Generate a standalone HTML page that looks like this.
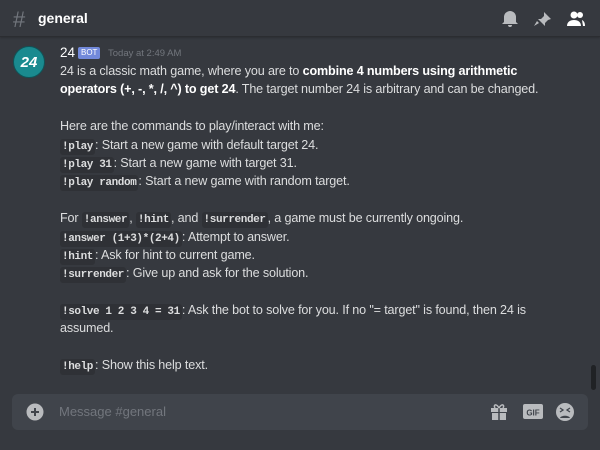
<!DOCTYPE html>
<html><head><style>
*{margin:0;padding:0;box-sizing:border-box}
body{width:600px;height:450px;background:#36393f;font-family:"Liberation Sans",sans-serif;color:#dcddde;overflow:hidden;position:relative}
.hdr{position:absolute;left:0;top:0;width:600px;height:37px;border-bottom:1px solid #2b2d31;box-shadow:0 1px 2px rgba(0,0,0,.2)}
.hash{position:absolute;left:13px;top:7px;font-size:22px;color:#72767d}
.title{position:absolute;left:38px;top:10px;font-size:14px;font-weight:bold;color:#fff}
.av{position:absolute;left:13px;top:46px;width:32px;height:32px;border-radius:50%;background:#1a8a8f;color:#fff;font-weight:bold;font-style:italic;font-size:15px;text-align:center;line-height:32px;border:1px solid #0f5458}
.name{position:absolute;left:60px;top:45px;font-size:13.5px;color:#fff;font-weight:500}
.bot{position:absolute;left:78px;top:47px;background:#7289da;color:#fff;font-size:8px;padding:1px 3px;border-radius:2px;line-height:10px}
.time{position:absolute;left:108px;top:48px;font-size:9.5px;color:#72767d}
.msg{position:absolute;left:60px;top:62px;font-size:12.6px;line-height:18.4px;white-space:nowrap;letter-spacing:-0.15px}
.msg div{height:18.4px}
.msg b{color:#fff}
code{font-family:"Liberation Mono",monospace;font-weight:bold;font-size:11px;background:#2f3136;padding:2px 2px;border-radius:3px;color:#dcddde;letter-spacing:-0.4px;line-height:0}
.input{position:absolute;left:12px;top:394px;width:576px;height:36px;background:#40444b;border-radius:6px}
.ph{position:absolute;left:59px;top:404px;font-size:13px;color:#72767d}
.sb{position:absolute;left:591px;top:365px;width:5px;height:25px;background:#202225;border-radius:3px}
</style></head><body>
<div class="hdr"></div>
<div class="hash">#</div>
<div class="title">general</div>
<svg style="position:absolute;left:500px;top:9px" width="90" height="20" viewBox="0 0 90 20">
<path d="M4 13V8a6 6 0 0 1 12 0v5l2 2H2z M8 16h4a2 2 0 0 1-4 0z" fill="#b9bbbe"/>
<path d="M44 3l7 7-3 1-3 3 0 3-7-7 3 0 3-3z M37 12l-3 5 5-3z" fill="#b9bbbe"/>
<circle cx="74" cy="6" r="3.5" fill="#fff"/><path d="M67 17c0-4 3-6 7-6s7 2 7 6z" fill="#fff"/>
<circle cx="80" cy="6" r="3" fill="#fff"/><path d="M82 11c2 1 3 3 3 6h-2z" fill="#fff"/>
</svg>
<div class="av">24</div>
<div class="name">24</div>
<div class="bot">BOT</div>
<div class="time">Today at 2:49 AM</div>
<div class="msg">
<div>24 is a classic math game, where you are to <b>combine 4 numbers using arithmetic</b></div>
<div><b>operators (+, -, *, /, ^) to get 24</b>. The target number 24 is arbitrary and can be changed.</div>
<div></div>
<div>Here are the commands to play/interact with me:</div>
<div><code>!play</code>: Start a new game with default target 24.</div>
<div><code>!play 31</code>: Start a new game with target 31.</div>
<div><code>!play random</code>: Start a new game with random target.</div>
<div></div>
<div>For <code>!answer</code>, <code>!hint</code>, and <code>!surrender</code>, a game must be currently ongoing.</div>
<div><code>!answer (1+3)*(2+4)</code>: Attempt to answer.</div>
<div><code>!hint</code>: Ask for hint to current game.</div>
<div><code>!surrender</code>: Give up and ask for the solution.</div>
<div></div>
<div><code>!solve 1 2 3 4 = 31</code>: Ask the bot to solve for you. If no "= target" is found, then 24 is</div>
<div>assumed.</div>
<div></div>
<div><code>!help</code>: Show this help text.</div>
</div>
<div class="sb"></div>
<div class="input"></div>
<svg style="position:absolute;left:26px;top:403px" width="18" height="18"><circle cx="9" cy="9" r="8.5" fill="#b9bbbe"/><path d="M9 5v8M5 9h8" stroke="#40444b" stroke-width="2"/></svg>
<div class="ph">Message #general</div>
<svg style="position:absolute;left:490px;top:402px" width="90" height="20" viewBox="0 0 90 20">
<path d="M1 6h16v4H1z M2 11h14v7H2z" fill="#b9bbbe"/><path d="M9 6v12" stroke="#40444b" stroke-width="1.5"/><path d="M9 6C6 1 3 3 5 6M9 6c3-5 6-3 4 0" stroke="#b9bbbe" stroke-width="1.5" fill="none"/>
<rect x="33" y="2" width="20" height="15" rx="2" fill="#b9bbbe"/><text x="43" y="13.5" font-size="8" font-weight="bold" text-anchor="middle" fill="#40444b" font-family="Liberation Sans">GIF</text>
<circle cx="75" cy="10" r="9" fill="#b9bbbe"/><path d="M70 6l3 2-3 2M80 6l-3 2 3 2" stroke="#40444b" stroke-width="1.3" fill="none"/><path d="M70 16c1-3 9-3 10 0z" fill="#40444b"/>
</svg>
</body></html>
